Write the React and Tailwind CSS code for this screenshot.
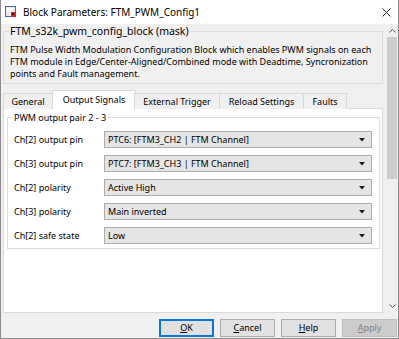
import React from 'react';

const rows = [
    { label: 'Ch[2] output pin', value: 'PTC6: [FTM3_CH2 | FTM Channel]' },
    { label: 'Ch[3] output pin', value: 'PTC7: [FTM3_CH3 | FTM Channel]' },
    { label: 'Ch[2] polarity', value: 'Active High' },
    { label: 'Ch[3] polarity', value: 'Main inverted' },
    { label: 'Ch[2] safe state', value: 'Low' },
];

const tabs = [
    { name: 'General', w: 'w-[50px]' },
    { name: 'Output Signals', w: 'w-[84px]', active: true },
    { name: 'External Trigger', w: 'w-[86px]' },
    { name: 'Reload Settings', w: 'w-[85px]' },
    { name: 'Faults', w: 'w-[44px]' },
];

const BlockIcon = () => (
    <svg width="12" height="12" viewBox="0 0 12 12" className="shrink-0">
        <rect x="0.5" y="0.5" width="10" height="10" fill="#e9e9e9" stroke="#3d6fb6" />
        <rect x="2" y="2" width="6" height="3" fill="#ffffff" />
        <rect x="6" y="6" width="5" height="5" fill="#d8232a" />
        <rect x="7" y="7" width="2" height="2" fill="#5a0b0b" />
    </svg>
);

const Dropdown = ({ value }) => (
    <div className="h-[17px] w-[268px] bg-[#e5e5e5] border border-[#adadad] flex items-center pl-[3px] pr-[6px]">
        <span className="flex-1 whitespace-nowrap leading-[15px]">{value}</span>
        <svg width="6" height="4" viewBox="0 0 6 4"><path d="M0 0H6L3 3.5Z" fill="#1a1a1a" /></svg>
    </div>
);

const Button = ({ mnemonic, rest, primary, disabled }) => (
    <div
        className={`w-[55px] h-[18px] flex items-center justify-center leading-[14px] ${
            primary
                ? 'border-2 border-[#0078d7] bg-[#e1e1e1]'
                : disabled
                ? 'border border-[#bfbfbf] bg-[#cccccc] text-[#838383]'
                : 'border border-[#adadad] bg-[#e1e1e1]'
        }`}
    >
        <span><u>{mnemonic}</u>{rest}</span>
    </div>
);

export default function App() {
    return (
        <div className="w-[399px] h-[339px] bg-[#f0f0f0] border-x border-b border-[#8c8c8c] flex flex-col text-[9px] text-[#000] font-[family-name:'Noto_Sans',sans-serif] overflow-hidden">
            {/* title bar */}
            <div className="h-[24px] shrink-0 bg-white flex items-center pl-[4px] pr-[6px]">
                <BlockIcon />
                <span className="ml-[6px] text-[10px]">Block Parameters: FTM_PWM_Config1</span>
                <svg width="9" height="9" viewBox="0 0 9 9" className="ml-auto mr-[1px]">
                    <path d="M0.5 0.5L8.5 8.5M8.5 0.5L0.5 8.5" stroke="#222" strokeWidth="1" />
                </svg>
            </div>

            <div className="flex flex-1 min-h-0">
                <div className="w-[385px] flex flex-col pl-[2px] pr-[3px]">
                    {/* mask description */}
                    <fieldset className="border border-[#dcdcdc] pl-[6px] pr-[2px] pb-[3px]">
                        <legend className="px-[1px] ml-[-1px] text-[10.5px] leading-[15px]">FTM_s32k_pwm_config_block (mask)</legend>
                        <p className="leading-[12px] pt-[5px] whitespace-nowrap">
                            FTM Pulse Width Modulation Configuration Block which enables PWM signals on each<br />
                            FTM module in Edge/Center-Aligned/Combined mode with Deadtime, Syncronization<br />
                            points and Fault management.
                        </p>
                    </fieldset>

                    {/* tabs */}
                    <div className="flex items-end h-[18px] mt-[7px] relative z-10">
                        {tabs.map((t) => (
                            <div
                                key={t.name}
                                className={`${t.w} flex items-center justify-center border-t border-x border-[#d9d9d9] leading-[14px] ${
                                    t.active ? 'h-[19px] bg-white border-b-0 -mx-[1px] pb-[1px]' : 'h-[16px] bg-[#f0f0f0] -ml-[1px] first:ml-0'
                                }`}
                            >
                                {t.name}
                            </div>
                        ))}
                    </div>

                    {/* tab panel */}
                    <div className="flex-1 bg-white border border-[#d9d9d9] -mt-[1px] pl-[3px] pr-[2px]">
                        <fieldset className="border border-[#dcdcdc] pl-[4px] pr-[6px] pb-[4px] mt-[1px]">
                            <legend className="px-[2px] leading-[15px]">PWM output pair 2 - 3</legend>
                            <div className="flex flex-col gap-[7px] pt-[6px]">
                                {rows.map((r) => (
                                    <div key={r.label} className="flex items-center pl-[2px]">
                                        <span className="w-[90px] shrink-0">{r.label}</span>
                                        <Dropdown value={r.value} />
                                    </div>
                                ))}
                            </div>
                        </fieldset>
                    </div>
                </div>

                {/* scrollbar */}
                <div className="w-[12px] flex flex-col items-center bg-[#f0f0f0]">
                    <svg width="7" height="4" viewBox="0 0 7 4" className="mt-[5px]">
                        <path d="M0.5 3.5L3.5 0.5L6.5 3.5" stroke="#555" fill="none" />
                    </svg>
                    <div className="w-[10px] h-[142px] bg-[#cdcdcd] mt-[4px]" />
                    <div className="flex-1" />
                    <svg width="7" height="4" viewBox="0 0 7 4" className="mb-[5px]">
                        <path d="M0.5 0.5L3.5 3.5L6.5 0.5" stroke="#555" fill="none" />
                    </svg>
                </div>
            </div>

            {/* buttons */}
            <div className="h-[25px] shrink-0 flex justify-end items-start gap-[6px] pt-[6px] pr-[1px]">
                <Button mnemonic="O" rest="K" primary />
                <Button mnemonic="C" rest="ancel" />
                <Button mnemonic="H" rest="elp" />
                <Button mnemonic="A" rest="pply" disabled />
            </div>
        </div>
    );
}
